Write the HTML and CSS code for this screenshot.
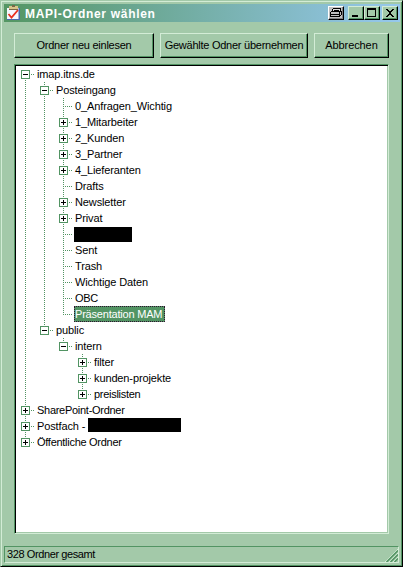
FILE: index.html
```html
<!DOCTYPE html>
<html lang="de">
<head>
<meta charset="utf-8">
<title>MAPI-Ordner wählen</title>
<link rel="stylesheet" href="styles.css">
</head>
<body>
<div class="window">
  <div class="titlebar">
    <svg class="app-icon" width="16" height="16" viewBox="0 0 16 16">
      <path fill="#4969b0" d="M1 3h13v12H1z"/><path fill="#f5f7ff" d="M1 3h11.500v11H1z"/>
      <path fill="#d8c48a" d="M3 1h9v3H3z"/><path fill="#786848" d="M6 0h3v2H6zM3 4h9v1H3z"/>
      <path fill="none" stroke="#e83020" stroke-width="1.800" d="M2.500 9l3 3.500L12 5"/>
    </svg>
    <h1 class="title">MAPI-Ordner wählen</h1>
    <span class="cap print"><svg width="14" height="12" viewBox="0 0 14 12" shape-rendering="crispEdges"><path fill="#ddd" d="M4 2h7v3H3z"/><path d="M4 1h8v1H4zM3 2h1v2H3zM11 2h1v2h-1zM5 3h5v1H5zM2 4h10v1H2zM1 5h1v5H1zM12 4h1v4h-1zM10 5h1v5h-1zM2 7h8v1H2zM2 9h9v1H2zM11 8h1v1h-1z"/></svg></span>
    <span class="cap min"><svg width="13" height="12" viewBox="0 0 13 12" shape-rendering="crispEdges"><path d="M3 8h6v2H3z"/></svg></span>
    <span class="cap max"><svg width="13" height="12" viewBox="0 0 13 12" shape-rendering="crispEdges"><path fill-rule="evenodd" d="M2 1h9v9H2zM3 3v6h7V3z"/></svg></span>
    <span class="cap close"><svg width="13" height="12" viewBox="0 0 13 12" shape-rendering="crispEdges"><path d="M3 2h2v1h1v1h2V3h1V2h2v1h-1v1H9v1H8v2h1v1h1v1h1v1H9V9H8V8H6v1H5v1H3V9h1V8h1V7h1V5H5V4H4V3H3z"/></svg></span>
  </div>
  <div class="toolbar">
    <button class="btn read">Ordner neu einlesen</button>
    <button class="btn apply">Gewählte Odner übernehmen</button>
    <button class="btn cancel">Abbrechen</button>
  </div>
  <div class="tree">
    <div class="row"><i class="g first box"></i><span class="label">imap.itns.de</span></div>
    <div class="row"><i class="g line"></i><i class="g box"></i><span class="label">Posteingang</span></div>
    <div class="row"><i class="g line"></i><i class="g line"></i><i class="g tee"></i><span class="label">0_Anfragen_Wichtig</span></div>
    <div class="row"><i class="g line"></i><i class="g line"></i><i class="g box plus"></i><span class="label">1_Mitarbeiter</span></div>
    <div class="row"><i class="g line"></i><i class="g line"></i><i class="g box plus"></i><span class="label">2_Kunden</span></div>
    <div class="row"><i class="g line"></i><i class="g line"></i><i class="g box plus"></i><span class="label">3_Partner</span></div>
    <div class="row"><i class="g line"></i><i class="g line"></i><i class="g box plus"></i><span class="label">4_Lieferanten</span></div>
    <div class="row"><i class="g line"></i><i class="g line"></i><i class="g tee"></i><span class="label">Drafts</span></div>
    <div class="row"><i class="g line"></i><i class="g line"></i><i class="g box plus"></i><span class="label">Newsletter</span></div>
    <div class="row"><i class="g line"></i><i class="g line"></i><i class="g box plus"></i><span class="label">Privat</span></div>
    <div class="row"><i class="g line"></i><i class="g line"></i><i class="g tee"></i><span class="hidden-name short"></span></div>
    <div class="row"><i class="g line"></i><i class="g line"></i><i class="g tee"></i><span class="label">Sent</span></div>
    <div class="row"><i class="g line"></i><i class="g line"></i><i class="g tee"></i><span class="label">Trash</span></div>
    <div class="row"><i class="g line"></i><i class="g line"></i><i class="g tee"></i><span class="label">Wichtige Daten</span></div>
    <div class="row"><i class="g line"></i><i class="g line"></i><i class="g tee"></i><span class="label tight">OBC</span></div>
    <div class="row"><i class="g line"></i><i class="g line"></i><i class="g tee last"></i><span class="label selected">Präsentation MAM</span></div>
    <div class="row"><i class="g line"></i><i class="g box last"></i><span class="label">public</span></div>
    <div class="row"><i class="g line"></i><i class="g"></i><i class="g box last"></i><span class="label">intern</span></div>
    <div class="row"><i class="g line"></i><i class="g"></i><i class="g"></i><i class="g box plus"></i><span class="label">filter</span></div>
    <div class="row"><i class="g line"></i><i class="g"></i><i class="g"></i><i class="g box plus"></i><span class="label">kunden-projekte</span></div>
    <div class="row"><i class="g line"></i><i class="g"></i><i class="g"></i><i class="g box plus last"></i><span class="label tight">preislisten</span></div>
    <div class="row"><i class="g box plus"></i><span class="label tight">SharePoint-Ordner</span></div>
    <div class="row"><i class="g box plus"></i><span class="label postfach">Postfach -</span><span class="hidden-name long"></span></div>
    <div class="row"><i class="g box plus last"></i><span class="label tight">Öffentliche Ordner</span></div>
  </div>
  <div class="status">
    <span class="total">328 Ordner gesamt</span>
    <svg class="grip" width="13" height="13" viewBox="0 0 13 13"><path stroke="#d3ecd6" d="M0 13L13 0M4 13l9-9M8 13l5-5"/><path stroke="#529463" stroke-width="1.500" d="M1.500 13L13 1.500M5.500 13L13 5.500M9.500 13L13 9.500"/></svg>
  </div>
</div>
</body>
</html>
```
FILE: styles.css
```css
*, *::before { box-sizing: border-box; }
body { margin: 0; overflow: hidden; }
.window {
  width: 403px;
  height: 567px;
  display: flex;
  flex-direction: column;
  padding: 3px;
  background: #a3c9a9;
  border: 1px solid #a3c9a9;
  border-right-color: #000;
  border-bottom-color: #000;
  box-shadow: inset 1px 1px #d3ecd6, inset -1px -1px #529463;
  font: 11px/16px "Liberation Sans", Arial, sans-serif;
  letter-spacing: -0.12px;
  color: #000;
}
.titlebar {
  height: 18px;
  display: flex;
  align-items: center;
  flex: none;
  margin-right: -1px;
  padding: 0 2px 0 2px;
  background: linear-gradient(90deg, #549663, #96c8ed);
}
.app-icon { flex: none; }
.title {
  flex: 1;
  margin: 2px 0 0 3px;
  font-size: 12px;
  line-height: 16px;
  letter-spacing: 0.7px;
  color: #fff;
  white-space: nowrap;
}
.cap {
  width: 16px;
  height: 14px;
  flex: none;
  background: #a3c9a9;
  border: 1px solid #d3ecd6;
  border-right-color: #000;
  border-bottom-color: #000;
  box-shadow: inset -1px -1px #529463;
}
.cap svg { display: block; }
.print {
  margin-right: 4px;
  background: #c0c0c0;
  border-color: #fff #000 #000 #fff;
  box-shadow: inset -1px -1px #808080;
}
.close { margin-left: 2px; }
.toolbar {
  display: flex;
  flex: none;
  height: 25px;
  margin: 11px 0 0 10px;
}
.btn {
  height: 25px;
  padding: 0 0 1px;
  font: inherit;
  letter-spacing: -0.25px;
  color: #000;
  white-space: nowrap;
  background: #a3c9a9;
  border: 1px solid #d3ecd6;
  border-right-color: #000;
  border-bottom-color: #000;
  border-radius: 0;
  box-shadow: inset -1px -1px #529463;
}
.read { width: 140px; }
.apply { width: 148px; margin: 0 6px; }
.cancel { width: 75px; letter-spacing: -0.1px; }
.tree {
  flex: none;
  width: 375px;
  height: 470px;
  margin: 6px 0 0 10px;
  padding: 1px;
  background: #fff;
  border: 1px solid #529463;
  border-right-color: #d3ecd6;
  border-bottom-color: #d3ecd6;
  box-shadow: inset 1px 1px #000, inset -1px -1px #a3c9a9;
}
.row { display: flex; height: 16px; }
.g {
  --v: repeating-linear-gradient(#529463 0 1px, transparent 1px 2px);
  --h: repeating-linear-gradient(90deg, #529463 0 1px, transparent 1px 2px);
  width: 19px;
  height: 16px;
  flex: none;
  background-repeat: no-repeat;
}
.line { background-image: var(--v); background-size: 1px 16px; background-position: 9px 0; }
.tee, .box {
  background-image: var(--v), var(--h);
  background-size: 1px 16px, 10px 1px;
  background-position: 9px 0, 9px 8px;
}
.last { background-size: 1px 8px, 10px 1px; }
.first { background-position: 9px 8px, 9px 8px; }
.box { padding: 4px 0 0 5px; }
.box::before {
  content: "";
  display: block;
  width: 9px;
  height: 9px;
  border: 1px solid #529463;
  background: linear-gradient(#000, #000) center / 5px 1px no-repeat, #fff;
}
.plus::before {
  background: linear-gradient(#000, #000) center / 5px 1px no-repeat,
    linear-gradient(#000, #000) center / 1px 5px no-repeat, #fff;
}
.label { margin-left: 1px; padding: 0 1px; white-space: nowrap; }
.tight { letter-spacing: -0.28px; }
.selected {
  width: 91px;
  padding: 0;
  border: 1px dotted #301030;
  line-height: 14px;
  letter-spacing: -0.2px;
  color: #fff;
  background: #529463;
}
.hidden-name { height: 15px; background: #000; }
.short { width: 58px; margin: 1px 0 0 1px; }
.postfach { width: 52px; }
.long { width: 93px; height: 14px; }
.status {
  flex: none;
  display: flex;
  justify-content: space-between;
  align-items: flex-end;
  height: 17px;
  margin-top: 12px;
  width: 395px;
  padding-left: 2px;
  border: 1px solid #529463;
  border-right-color: #d3ecd6;
  border-bottom-color: #d3ecd6;
}
.total { letter-spacing: -0.4px; }
.grip { flex: none; }
```
